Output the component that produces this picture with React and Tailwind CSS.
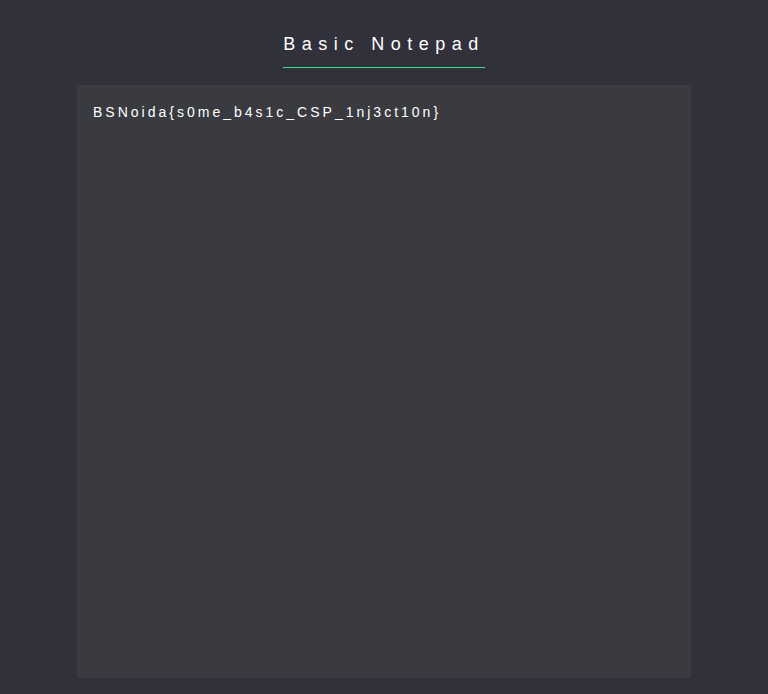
import React, { useState } from 'react';

const App = () => {
    const [note, setNote] = useState('BSNoida{s0me_b4s1c_CSP_1nj3ct10n}');

    return (
        <div className="min-h-screen bg-[#30313a] flex flex-col items-center pt-[32px] font-['Liberation_Sans',Arial,sans-serif]">
            <h1 className="text-white text-[18px] leading-[24px] tracking-[6.5px] pb-[11px] border-b border-[#3ddc8f]">
                Basic Notepad
            </h1>
            <textarea
                value={note}
                onChange={(e) => setNote(e.target.value)}
                spellCheck={false}
                className="mt-[17px] w-[614px] h-[593px] bg-[#3a3b40] text-white text-[14px] leading-[20px] tracking-[3px] p-4 pt-[17px] resize-none outline-none border-0"
            />
        </div>
    );
};

export default App;
